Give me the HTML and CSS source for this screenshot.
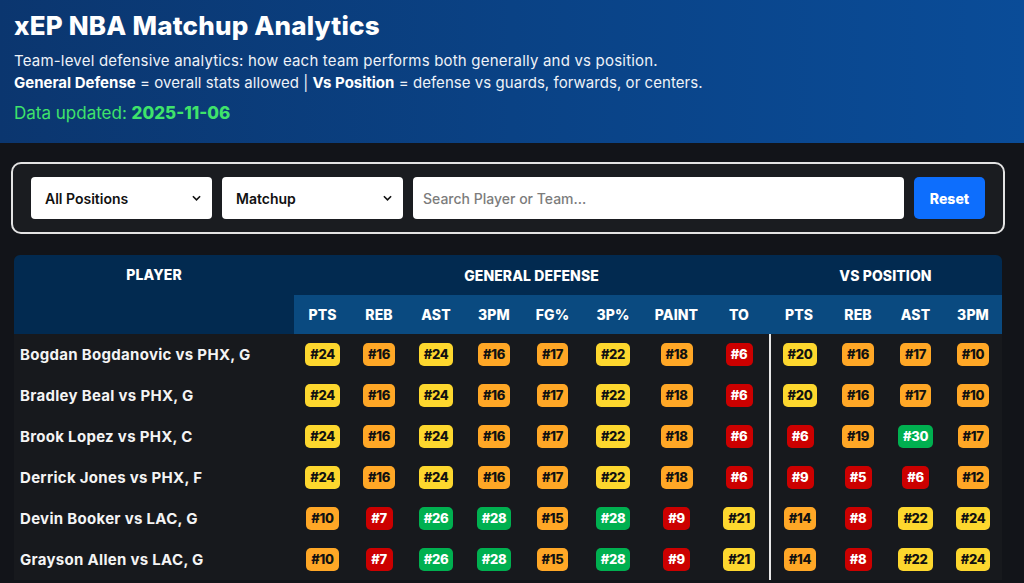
FILE: index.html
```html
<!DOCTYPE html>
<html>
<head>
<meta charset="utf-8">
<link rel="stylesheet" href="styles.css">
</head>
<body>
<header class="hero">
  <h1 class="title">xEP NBA Matchup Analytics</h1>
  <p class="sub">Team-level defensive analytics: how each team performs both generally and vs position.</p>
  <p class="sub sub2"><b>General Defense</b> = overall stats allowed | <b>Vs Position</b> = defense vs guards, forwards, or centers.</p>
  <p class="updated">Data updated: <b>2025-11-06</b></p>
</header>
<main class="main">
  <div class="filters">
    <div class="select"><span>All Positions</span><svg viewBox="0 0 10 6" class="chev"><path d="M1 1l4 4 4-4" fill="none" stroke="#111" stroke-width="1.8"/></svg></div>
    <div class="select"><span>Matchup</span><svg viewBox="0 0 10 6" class="chev"><path d="M1 1l4 4 4-4" fill="none" stroke="#111" stroke-width="1.8"/></svg></div>
    <div class="search">Search Player or Team...</div>
    <button class="reset">Reset</button>
  </div>
  <table class="tbl">
    <colgroup>
      <col style="width:280px"><col style="width:57px"><col style="width:56px"><col style="width:58px"><col style="width:58px"><col style="width:59px"><col style="width:62px"><col style="width:65px"><col style="width:60px"><col style="width:60px"><col style="width:58px"><col style="width:57px"><col style="width:58px">
    </colgroup>
    <thead>
      <tr class="h1">
        <th rowspan="2" class="pl-h">PLAYER</th>
        <th colspan="8">GENERAL DEFENSE</th>
        <th colspan="4">VS POSITION</th>
      </tr>
      <tr class="h2">
        <th>PTS</th><th>REB</th><th>AST</th><th>3PM</th><th>FG%</th><th>3P%</th><th>PAINT</th><th>TO</th>
        <th>PTS</th><th>REB</th><th>AST</th><th>3PM</th>
      </tr>
    </thead>
    <tbody id="rows">
      <tr><td class="name">Bogdan Bogdanovic vs PHX, G</td><td><span class="b y">#24</span></td><td><span class="b o">#16</span></td><td><span class="b y">#24</span></td><td><span class="b o">#16</span></td><td><span class="b o">#17</span></td><td><span class="b y">#22</span></td><td><span class="b o">#18</span></td><td><span class="b r">#6</span></td><td class="sep"><span class="b y">#20</span></td><td><span class="b o">#16</span></td><td><span class="b o">#17</span></td><td><span class="b o">#10</span></td></tr>
      <tr><td class="name">Bradley Beal vs PHX, G</td><td><span class="b y">#24</span></td><td><span class="b o">#16</span></td><td><span class="b y">#24</span></td><td><span class="b o">#16</span></td><td><span class="b o">#17</span></td><td><span class="b y">#22</span></td><td><span class="b o">#18</span></td><td><span class="b r">#6</span></td><td class="sep"><span class="b y">#20</span></td><td><span class="b o">#16</span></td><td><span class="b o">#17</span></td><td><span class="b o">#10</span></td></tr>
      <tr><td class="name">Brook Lopez vs PHX, C</td><td><span class="b y">#24</span></td><td><span class="b o">#16</span></td><td><span class="b y">#24</span></td><td><span class="b o">#16</span></td><td><span class="b o">#17</span></td><td><span class="b y">#22</span></td><td><span class="b o">#18</span></td><td><span class="b r">#6</span></td><td class="sep"><span class="b r">#6</span></td><td><span class="b o">#19</span></td><td><span class="b g">#30</span></td><td><span class="b o">#17</span></td></tr>
      <tr><td class="name">Derrick Jones vs PHX, F</td><td><span class="b y">#24</span></td><td><span class="b o">#16</span></td><td><span class="b y">#24</span></td><td><span class="b o">#16</span></td><td><span class="b o">#17</span></td><td><span class="b y">#22</span></td><td><span class="b o">#18</span></td><td><span class="b r">#6</span></td><td class="sep"><span class="b r">#9</span></td><td><span class="b r">#5</span></td><td><span class="b r">#6</span></td><td><span class="b o">#12</span></td></tr>
      <tr><td class="name">Devin Booker vs LAC, G</td><td><span class="b o">#10</span></td><td><span class="b r">#7</span></td><td><span class="b g">#26</span></td><td><span class="b g">#28</span></td><td><span class="b o">#15</span></td><td><span class="b g">#28</span></td><td><span class="b r">#9</span></td><td><span class="b y">#21</span></td><td class="sep"><span class="b o">#14</span></td><td><span class="b r">#8</span></td><td><span class="b y">#22</span></td><td><span class="b y">#24</span></td></tr>
      <tr><td class="name">Grayson Allen vs LAC, G</td><td><span class="b o">#10</span></td><td><span class="b r">#7</span></td><td><span class="b g">#26</span></td><td><span class="b g">#28</span></td><td><span class="b o">#15</span></td><td><span class="b g">#28</span></td><td><span class="b r">#9</span></td><td><span class="b y">#21</span></td><td class="sep"><span class="b o">#14</span></td><td><span class="b r">#8</span></td><td><span class="b y">#22</span></td><td><span class="b y">#24</span></td></tr>
    </tbody>
  </table>
</main>
</body>
</html>
```

FILE: styles.css
```css
* { box-sizing: border-box; }
html, body { margin: 0; padding: 0; }
body {
  background: #121419;
  font-family: "Inter", "Noto Sans", sans-serif;
  color: #fff;
  overflow: hidden;
  height: 583px;
}
.hero {
  background: linear-gradient(90deg, #0b366f 0%, #0a4285 50%, #0a4c98 100%);
  height: 143px;
  padding: 11px 14px 0;
}
.title {
  margin: 0;
  font-size: 26px;
  font-weight: 800;
  line-height: 30px;
  letter-spacing: 0.2px;
}
.sub {
  margin: 0;
  font-size: 15px;
  line-height: 22px;
  color: #eef2f8;
  letter-spacing: 0.2px;
}
.sub2 { letter-spacing: 0.05px; }
.hero .sub:first-of-type { margin-top: 9px; }
.sub b { font-weight: 700; color: #fff; letter-spacing: 0; }
.updated {
  margin: 8px 0 0;
  font-size: 17px;
  line-height: 22px;
  color: #3fe36b;
  letter-spacing: 0;
}
.updated b { font-weight: 800; }
.main { padding-top: 19px; }
.filters {
  margin: 0 19px 0 11px;
  border: 2px solid #e3e3e3;
  border-radius: 10px;
  background: #1a1c20;
  padding: 13px 18px;
  display: flex;
  gap: 10px;
  align-items: center;
}
.select {
  width: 181px;
  height: 42px;
  background: #fff;
  border-radius: 4px;
  display: flex;
  align-items: center;
  justify-content: space-between;
  padding: 0 11px 0 14px;
  color: #111;
  font-size: 14px;
  font-weight: 600;
}
.chev { width: 9px; height: 6px; }
.search {
  flex: 1;
  height: 42px;
  background: #fff;
  border-radius: 4px;
  display: flex;
  align-items: center;
  padding: 0 10px;
  color: #7c7c7c;
  font-size: 14px;
  font-weight: 500;
}
.reset {
  width: 71px;
  height: 42px;
  border: 0;
  border-radius: 5px;
  background: #0d6efd;
  color: #fff;
  font-family: inherit;
  font-weight: 800;
  font-size: 14px;
}
.tbl {
  margin: 21px 0 0 14px;
  width: 988px;
  table-layout: fixed;
  border-collapse: separate;
  border-spacing: 0;
  background: #17191d;
  border-radius: 6px 6px 0 0;
  overflow: hidden;
}
.tbl th {
  font-size: 14px;
  font-weight: 800;
  color: #fff;
  text-align: center;
  padding: 0;
  letter-spacing: 0.1px;
}
.h1 th { background: #022a50; height: 40px; }
.h1 th.pl-h { vertical-align: top; padding-top: 11px; }
.h2 th { background: #0a4a80; height: 39px; }
.tbl td {
  height: 41px;
  padding: 0;
  text-align: center;
  background: #17191d;
}
.tbl td.name {
  text-align: left;
  padding-left: 6px;
  font-size: 15px;
  font-weight: 700;
  color: #f4f4f4;
  letter-spacing: 0.3px;
}
.tbl td.sep { border-left: 2px solid #e8e8e8; }
.b {
  display: inline-block;
  min-width: 27px;
  height: 23px;
  line-height: 23px;
  padding: 0 5px;
  border-radius: 5px;
  font-size: 13px;
  font-weight: 800;
  letter-spacing: -0.3px;
}
.b.y { background: #fdd72e; color: #111; }
.b.o { background: #ffa726; color: #111; }
.b.r { background: #cc0000; color: #fff; }
.b.g { background: #00b050; color: #fff; }
```
